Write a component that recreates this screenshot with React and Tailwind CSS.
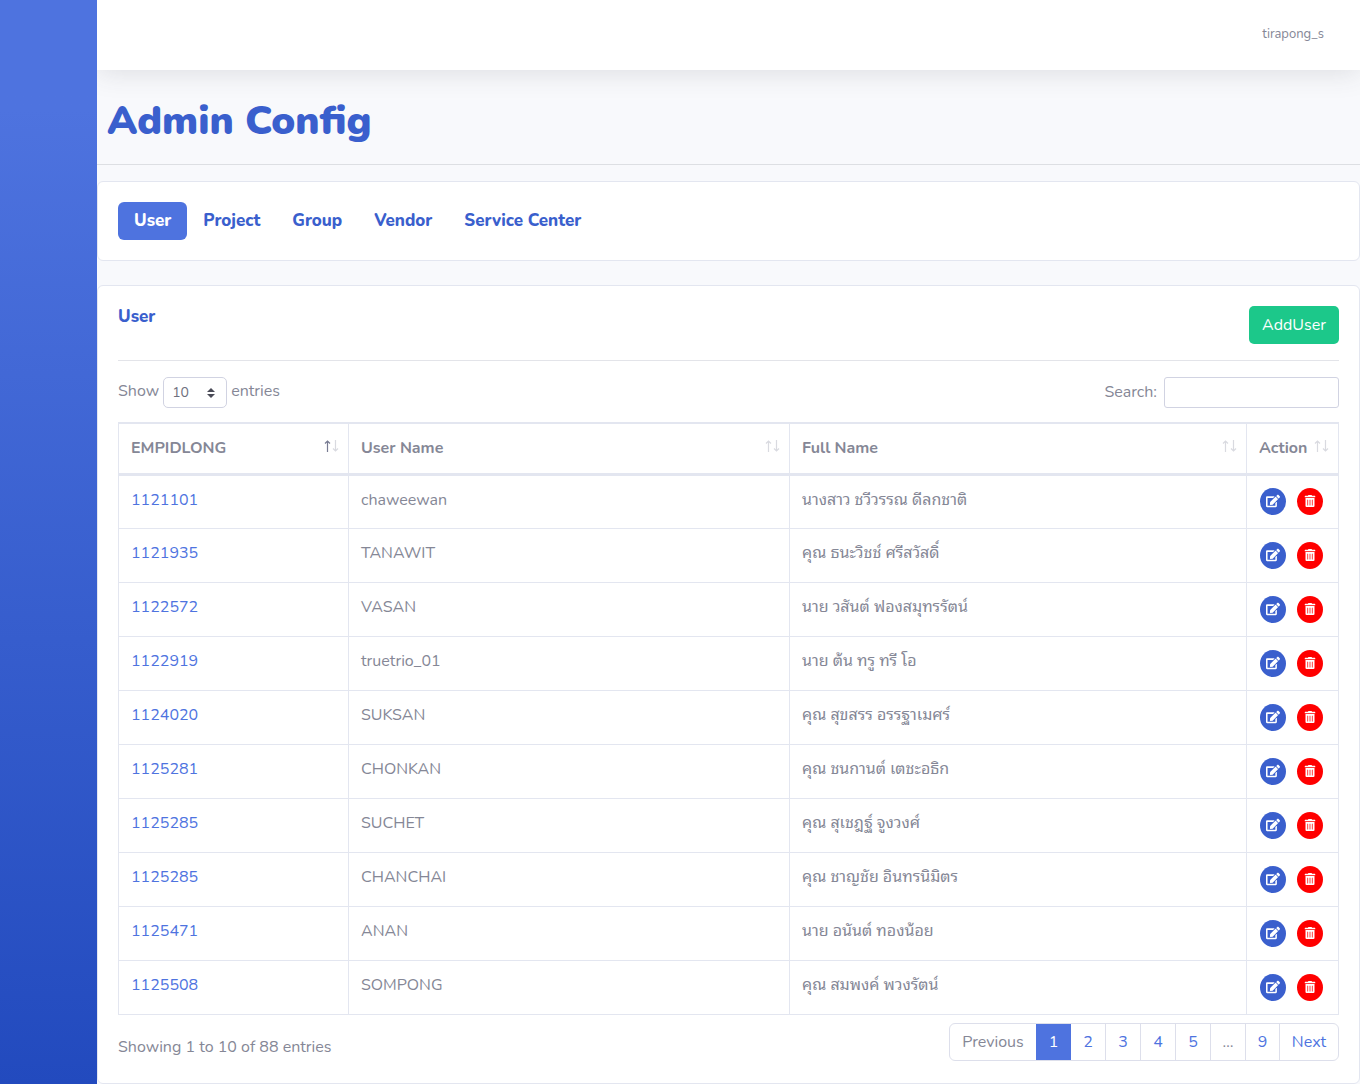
import { FaEdit, FaTrashAlt } from "react-icons/fa";

const users = [
  ["1121101", "chaweewan", "นางสาว ชวีวรรณ ดีลกชาติ"],
  ["1121935", "TANAWIT", "คุณ ธนะวิชช์ ศรีสวัสดิ์"],
  ["1122572", "VASAN", "นาย วสันต์ ฟองสมุทรรัตน์"],
  ["1122919", "truetrio_01", "นาย ต้น ทรู ทรี โอ"],
  ["1124020", "SUKSAN", "คุณ สุขสรร อรรฐาเมศร์"],
  ["1125281", "CHONKAN", "คุณ ชนกานต์ เตชะอธิก"],
  ["1125285", "SUCHET", "คุณ สุเชฎฐ์ จูงวงศ์"],
  ["1125285", "CHANCHAI", "คุณ ชาญชัย อินทรนิมิตร"],
  ["1125471", "ANAN", "นาย อนันต์ ทองน้อย"],
  ["1125508", "SOMPONG", "คุณ สมพงค์ พวงรัตน์"],
];

const tabs = ["Project", "Group", "Vendor", "Service Center"];

const columns = [
  { label: "EMPIDLONG", width: "w-[230px]", sorted: true },
  { label: "User Name", width: "w-[441px]" },
  { label: "Full Name", width: "w-[457px]" },
  { label: "Action", width: "w-[92px]" },
];

function SortArrows({ sorted }) {
  return (
    <svg width="15" height="12" viewBox="0 0 15 12" fill="none" aria-hidden="true" className="mb-1 shrink-0">
      <path d="M3.5 12V1M1 3.5L3.5 1L6 3.5" stroke={sorted ? "#777b92" : "#d9dae0"} strokeWidth="1.2" />
      <path d="M11.5 0V11M9 8.500L11.5 11L14 8.500" stroke="#d9dae0" strokeWidth="1.2" />
    </svg>
  );
}

function Pages() {
  const link = "h-[38px] border-r border-[#dddfeb] text-[#4e73df]";
  return (
    <nav aria-label="Table pages" className="flex h-[38px] items-center overflow-hidden rounded-[6px] border border-[#dddfeb]">
      <button disabled className="h-[38px] w-[86px]">Previous</button>
      <button aria-current="page" className="h-[38px] w-[35px] bg-[#4e73df] text-white">1</button>
      {["2", "3", "4", "5"].map((n) => (
        <button key={n} className={link + " w-[35px]"}>{n}</button>
      ))}
      <span className="flex h-[38px] w-[35px] items-center justify-center border-r border-[#dddfeb]">…</span>
      <button className={link + " w-[34px]"}>9</button>
      <button className="h-[38px] w-[58px] text-[#4e73df]">Next</button>
    </nav>
  );
}

export default function App() {
  const cell = "border-r border-[#e3e6f0] px-3 pt-3 align-top";
  return (
    <div className="flex min-h-screen bg-[#f8f9fc] font-[Nunito,'Noto_Sans_Thai_Looped',Loma,Waree,Garuda,Tahoma,sans-serif] text-base text-[#858796]">
      <aside className="w-[97px] shrink-0 bg-linear-to-b from-[#4e73df] from-10% to-[#224abe]" />
      <div className="min-w-0 flex-1 overflow-hidden">
        <header className="flex h-[70px] items-center justify-end bg-white px-9 text-[13px] shadow-[0_2px_28px_rgba(58,59,69,0.15)]">
          <a href="#profile">tirapong_s</a>
        </header>
        <main>
          <h1 className="border-b border-[#dddfe3] px-[10px] pt-[27px] pb-[19px] text-[40px] leading-[48px] font-black text-[#3a5fcd]">Admin Config</h1>
          <section className="mt-4 rounded-[6px] border border-[#e3e6f0] bg-white p-5">
            <nav className="flex text-[17px] leading-[22px] font-[850] text-[#3a5fcd]">
              <a href="#user" className="rounded-[6px] bg-[#4e73df] px-4 py-2 text-white">User</a>
              {tabs.map((t) => (
                <a key={t} href={"#" + t} className="px-4 py-2">{t}</a>
              ))}
            </nav>
          </section>
          <section className="mt-6 rounded-[6px] border border-[#e3e6f0] bg-white px-5 pt-5 pb-[22px]">
            <div className="flex items-start justify-between border-b border-[#e3e4e9] pb-4">
              <h2 className="text-[17px] leading-[22px] font-[850] text-[#3a5fcd]">User</h2>
              <button className="h-[38px] w-[90px] rounded-[5px] bg-[#1cc88a] text-white">AddUser</button>
            </div>
            <div className="mt-4 flex h-[31px] items-center justify-between">
              <label className="flex items-start gap-1">
                <span className="pt-0.5">Show</span>
                <span className="relative">
                  <select className="block h-[31px] w-16 appearance-none rounded-[5px] border border-[#d1d3e2] bg-white pl-2 text-sm text-[#6e707e]">
                    <option>10</option>
                    <option>25</option>
                    <option>50</option>
                  </select>
                  <svg width="8" height="10" viewBox="0 0 4 5" className="pointer-events-none absolute top-[11px] right-3" fill="#4a4b57" aria-hidden="true">
                    <path d="M2 0L0 2h4zm0 5L0 3h4z" />
                  </svg>
                </span>
                <span className="pt-0.5">entries</span>
              </label>
              <label className="flex items-start gap-[7px]">
                <span className="pt-[3px]">Search:</span>
                <input type="search" className="h-[31px] w-[175px] rounded-[3px] border border-[#d1d3e2] bg-white px-2 text-sm" />
              </label>
            </div>
            <table className="mt-[14px] w-full table-fixed border-collapse border border-[#e3e6f0]">
              <thead>
                <tr className="h-[51px] border-t-2 border-b-3 border-[#e3e6f0]">
                  {columns.map((c) => (
                    <th key={c.label} className={c.width + " border-r border-[#e3e6f0] pl-3 pr-[9px] text-left font-bold"}>
                      <span className="flex items-center justify-between whitespace-nowrap">
                        {c.label}
                        <SortArrows sorted={c.sorted} />
                      </span>
                    </th>
                  ))}
                </tr>
              </thead>
              <tbody>
                {users.map(([id, name, full]) => (
                  <tr key={name} className="h-[54px] border-b border-[#e3e6f0]">
                    <td className={cell + " text-[#4e73df]"}>{id}</td>
                    <td className={cell}>{name}</td>
                    <td className={cell}>{full}</td>
                    <td className="px-3">
                      <span className="flex gap-[11px] pl-px">
                        <button aria-label={"Edit " + name} className="flex h-[27px] w-[26px] items-center justify-center rounded-[50%] bg-[#3a5fcd] pb-px text-white">
                          <FaEdit size={14} />
                        </button>
                        <button aria-label={"Delete " + name} className="flex h-[27px] w-[26px] items-center justify-center rounded-[50%] bg-[#ff0000] pb-px text-white">
                          <FaTrashAlt size={12} />
                        </button>
                      </span>
                    </td>
                  </tr>
                ))}
              </tbody>
            </table>
            <div className="mt-2 flex items-start justify-between">
              <p className="pt-3">Showing 1 to 10 of 88 entries</p>
              <Pages />
            </div>
          </section>
        </main>
      </div>
    </div>
  );
}
